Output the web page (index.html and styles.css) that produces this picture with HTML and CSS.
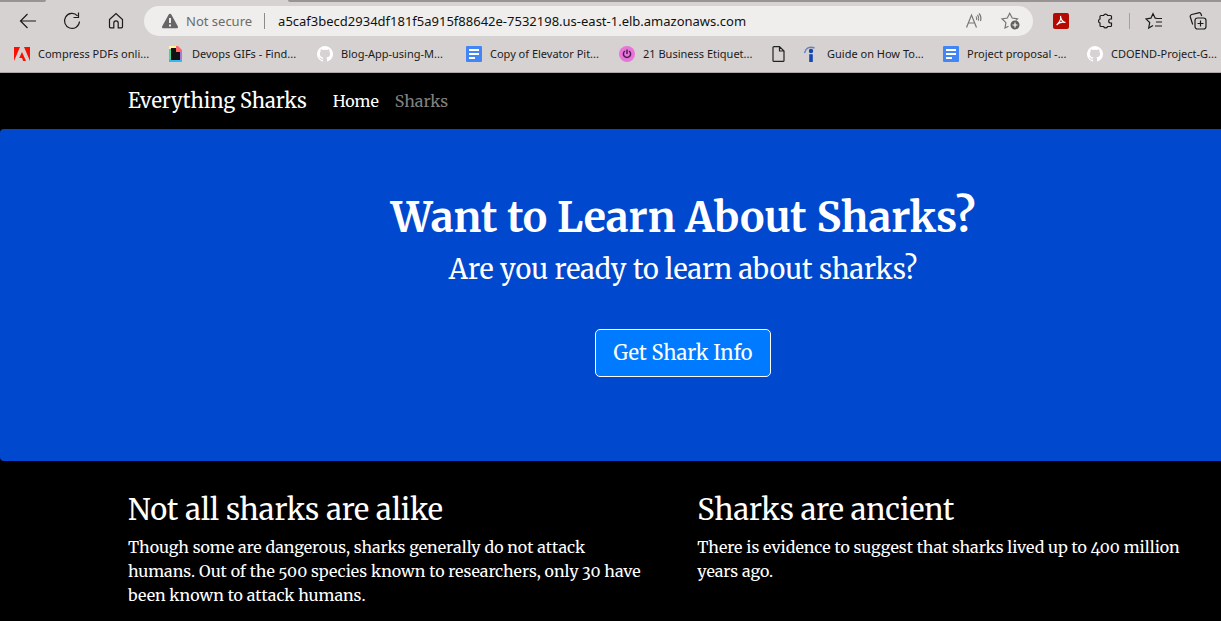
FILE: index.html
```html
<!DOCTYPE html>
<html lang="en">
<head>
<meta charset="utf-8">
<meta name="viewport" content="width=device-width, initial-scale=1">
<title>Everything Sharks</title>
<link rel="stylesheet" href="styles.css">
</head>
<body>
<header class="browser">
  <div class="tabs"><span class="tab-left"></span><span class="tab-active"></span><span class="tab-rest"></span></div>
  <div class="toolbar">
    <div class="nav-buttons">
      <button class="tool" type="button" aria-label="Back"><svg width="18" height="18" viewBox="0 0 18 18"><path d="M17 9H1.500M8.500 2 1.500 9l7 7"/></svg></button>
      <button class="tool" type="button" aria-label="Refresh"><svg width="18" height="18" viewBox="0 0 18 18"><path d="M16.500 9.500A7.500 7.500 0 1 1 14.500 3.800M15.500.5v5h-5"/></svg></button>
      <button class="tool" type="button" aria-label="Home"><svg width="18" height="18" viewBox="0 0 18 18"><path d="M2.500 7.500 9 1.500l6.500 6v7.300q0 1-1 1h-3.300V11a2.200 2.200 0 0 0-4.400 0v4.800H3.500q-1 0-1-1z"/></svg></button>
    </div>
    <div class="address">
      <svg class="warning" width="18" height="16" viewBox="0 0 18 16"><path d="M7.700 1.500a1.500 1.500 0 0 1 2.600 0l6.500 11.800a1.300 1.300 0 0 1-1.200 2H2.400a1.300 1.300 0 0 1-1.200-2z"/><path class="mark" d="M9 5v5M9 11.500v2"/></svg>
      <span class="security">Not secure</span>
      <input class="url" type="text" aria-label="Address" value="a5caf3becd2934df181f5a915f88642e-7532198.us-east-1.elb.amazonaws.com">
      <button class="tool muted" type="button" aria-label="Read aloud"><svg width="18" height="18" viewBox="0 0 18 18"><path d="M1.500 15.500 6.500 3l5 12.500M3.500 11h6M11 4.500q1.200 1.500.6 3.500M12.500 2.800q2 2.500 1 5.800M14 1.500q2.800 3.300 1.500 7.500"/></svg></button>
      <button class="tool muted" type="button" aria-label="Add to favorites"><svg width="20" height="20" viewBox="0 0 20 20"><path d="M8.500 15.200 5 17l.9-5.400L2 7.800l5.300-.8L9.700 2.200 12.200 7l5.300.8-1.500 1.500"/><circle class="solid" cx="15" cy="14" r="4.500"/><path class="mark" d="M15 11.500v5M12.500 14h5"/></svg></button>
    </div>
    <div class="extensions">
      <button class="tool" type="button" aria-label="Adobe Acrobat"><svg width="16" height="16" viewBox="0 0 16 16"><rect class="red" width="16" height="16" rx="2"/><path class="white-line" d="M7.500 3c.8 2.500-.7 6-3.800 9C5.500 9.700 9 8.600 12.500 9.500 9.700 9 7.800 6.500 7.500 3z"/></svg></button>
      <button class="tool" type="button" aria-label="Extensions"><svg width="18" height="18" viewBox="0 0 18 18"><path d="M5 3.500h2.600a2.100 2.100 0 0 1 4 0H14.500q1 0 1 1V7h-.8a2 2 0 0 0 0 4h.8v2.500q0 1-1 1h-2.900a2.100 2.100 0 0 1-4 0H5q-1 0-1-1V11a2.100 2.100 0 0 1 0-4V4.500q0-1 1-1z"/></svg></button>
      <span class="separator"></span>
      <button class="tool" type="button" aria-label="Favorites"><svg width="18" height="18" viewBox="0 0 18 18"><path d="M8 13.500 3.700 16l1-5.500L.9 6.900l5-.7L8 1.700l2.200 4.500 2 .3H17M11 10h6M10 14h7"/></svg></button>
      <button class="tool" type="button" aria-label="Collections"><svg width="18" height="18" viewBox="0 0 18 18"><rect x="6" y="6" width="11" height="11" rx="2.500"/><path d="M11.500 8.500v6M8.500 11.500h6M3.700 12.500 1.300 5A2 2 0 0 1 2.700 2.500l7-1.700A2 2 0 0 1 12 2l.7 2"/></svg></button>
    </div>
  </div>
  <nav class="bookmarks" aria-label="Favorites bar">
    <a href="#"><svg width="16" height="16" viewBox="0 0 16 16"><path fill="#fa0f00" d="M0 1h6L0 15zM10 1h6v14zM8 6l4 9H9.200L8 12H5.200z"/></svg>Compress PDFs onli...</a>
    <a href="#"><svg width="16" height="16" viewBox="0 0 16 16"><path fill="#a678d8" d="M12 5h2v9h-2z"/><path fill="#42d69b" d="M1 2h3v12H1z"/><path fill="#fff59a" d="M1 0h8v3H1z"/><path fill="#35b8f1" d="M1 13h13v3H1z"/><path fill="#121212" d="M3 2h6v4h3v8H3z"/><path fill="#ff6666" d="M8 0h2l4 4v2H8z"/></svg>Devops GIFs - Find...</a>
    <a href="#"><svg width="16" height="16" viewBox="0 0 16 16"><path fill="#fff" d="M8 0a8 8 0 0 0-2.500 15.600c.4.100.5-.2.500-.4v-1.500c-2.200.5-2.700-1-2.700-1-.4-.9-.9-1.200-.9-1.200-.7-.5.100-.5.100-.5.800.1 1.200.9 1.200.9.700 1.200 1.900.9 2.300.7.100-.5.300-.9.500-1.100-1.800-.2-3.600-.9-3.600-4 0-.9.300-1.600.8-2.100-.1-.2-.4-1 .1-2.100 0 0 .7-.2 2.200.8a7.700 7.700 0 0 1 4 0c1.500-1 2.200-.8 2.200-.8.400 1.100.2 1.900.1 2.100.5.600.8 1.300.8 2.100 0 3.100-1.900 3.700-3.600 4 .3.200.5.700.5 1.400v2.300c0 .2.100.5.500.4A8 8 0 0 0 8 0z"/></svg>Blog-App-using-M...</a>
    <a href="#"><svg width="16" height="16" viewBox="0 0 16 16"><rect width="16" height="16" rx="1" fill="#4285f4"/><path stroke="#fff" stroke-width="2" d="M3 4h10M3 8h10M3 12h6"/></svg>Copy of Elevator Pit...</a>
    <a href="#"><svg width="16" height="16" viewBox="0 0 16 16"><circle cx="8" cy="8" r="8" fill="#e874d8"/><path fill="none" stroke="#4a1f52" stroke-width="1.500" d="M6 5a3.600 3.600 0 1 0 4 0M8 3.500V8"/></svg>21 Business Etiquet...</a>
    <a href="#" aria-label="Untitled page"><svg width="16" height="16" viewBox="0 0 16 16"><path fill="none" stroke="#222" stroke-width="1.200" d="M4 .6h5.500l4.500 4.400v9.400q0 1-1 1H4q-1 0-1-1V1.600q0-1 1-1zM9.500.6V5H14"/></svg></a>
    <a href="#"><svg width="16" height="16" viewBox="0 0 16 16"><path fill="none" stroke="#5d82c4" stroke-width="1.500" d="M1.500 7C2.500 2 6.500 .2 11.500 2"/><circle cx="8" cy="5" r="2.200" fill="#1547b0"/><path fill="#1547b0" d="M6.200 8.200h3.600V16H6.200z"/></svg>Guide on How To...</a>
    <a href="#"><svg width="16" height="16" viewBox="0 0 16 16"><rect width="16" height="16" rx="1" fill="#4285f4"/><path stroke="#fff" stroke-width="2" d="M3 4h10M3 8h10M3 12h6"/></svg>Project proposal -...</a>
    <a href="#"><svg width="16" height="16" viewBox="0 0 16 16"><path fill="#fff" d="M8 0a8 8 0 0 0-2.500 15.600c.4.100.5-.2.500-.4v-1.500c-2.200.5-2.700-1-2.700-1-.4-.9-.9-1.200-.9-1.200-.7-.5.100-.5.100-.5.800.1 1.200.9 1.200.9.700 1.200 1.900.9 2.300.7.100-.5.300-.9.500-1.100-1.800-.2-3.600-.9-3.600-4 0-.9.300-1.600.8-2.100-.1-.2-.4-1 .1-2.100 0 0 .7-.2 2.200.8a7.700 7.700 0 0 1 4 0c1.500-1 2.200-.8 2.200-.8.400 1.100.2 1.900.1 2.100.5.600.8 1.300.8 2.100 0 3.100-1.900 3.700-3.600 4 .3.200.5.700.5 1.400v2.300c0 .2.100.5.500.4A8 8 0 0 0 8 0z"/></svg>CDOEND-Project-G...</a>
  </nav>
</header>
<nav class="navbar">
  <a class="brand" href="#">Everything Sharks</a>
  <a class="nav-link active" href="#">Home</a>
  <a class="nav-link" href="#">Sharks</a>
</nav>
<main>
  <section class="hero">
    <h1>Want to Learn About Sharks?</h1>
    <p>Are you ready to learn about sharks?</p>
    <a class="button" href="#">Get Shark Info</a>
  </section>
  <section class="facts">
    <article>
      <h3>Not all sharks are alike</h3>
      <p>Though some are dangerous, sharks generally do not attack humans. Out of the 500 species known to researchers, only 30 have been known to attack humans.</p>
    </article>
    <article>
      <h3>Sharks are ancient</h3>
      <p>There is evidence to suggest that sharks lived up to 400 million years ago.</p>
    </article>
  </section>
</main>
</body>
</html>
```

FILE: styles.css
```css
* { box-sizing: border-box; }
body {
  margin: 0;
  overflow-x: hidden;
  background: #000;
  color: #fff;
  font: 16px/24px Merriweather, "DejaVu Serif Condensed", "DejaVu Serif", serif;
  font-variant-numeric: oldstyle-nums;
}
a { color: inherit; text-decoration: none; }

.browser {
  background: #d6d2d1;
  border-bottom: 1px solid #aaa7a6;
  color: #1b1b1b;
  font: 11px/16px "Noto Sans", "Open Sans", sans-serif;
}
.tabs { display: flex; height: 2px; }
.tab-left { width: 46px; border-radius: 0 0 2px 0; background: #989493; }
.tab-active { width: 242px; }
.tab-rest { flex: 1; border-radius: 0 0 0 2px; background: #989493; }
.toolbar { display: flex; align-items: center; height: 38px; }
.nav-buttons { display: flex; gap: 20px; padding-left: 16px; width: 144px; }
.tool {
  display: flex;
  align-items: center;
  justify-content: center;
  width: 24px;
  height: 24px;
  padding: 0;
  border: 0;
  background: none;
  flex: none;
}
.tool svg { fill: none; stroke: #1b1b1b; stroke-width: 1.2; }
.address {
  display: flex;
  align-items: center;
  flex: 1;
  height: 30px;
  padding: 0 11px 0 17px;
  border-radius: 15px;
  background: #efeeec;
}
.warning { fill: #666; }
.warning .mark { stroke: #efeeec; stroke-width: 2; }
.security {
  margin-left: 7px;
  padding-right: 12px;
  border-right: 1px solid #8a8a8a;
  color: #6b6b6b;
  font-size: 13px;
}
.url {
  flex: 1;
  min-width: 0;
  padding: 0 0 0 13px;
  border: 0;
  background: none;
  color: #111;
  font: 13px/20px "Noto Sans", "Open Sans", sans-serif;
}
.muted svg { stroke: #767676; }
.muted + .muted { margin-left: 12px; }
.muted .solid { fill: #5f5f5f; stroke: none; }
.muted .mark { stroke: #fff; }
.extensions { display: flex; align-items: center; padding: 0 11px 0 16px; }
.extensions .tool + .tool { margin-left: 20px; }
.tool .red { fill: #b30b00; stroke: none; }
.tool .white-line { stroke: #fff; }
.separator { width: 1px; height: 16px; margin: 0 12px; background: #a3a09f; }

.bookmarks {
  display: grid;
  grid-template-columns: 154px 149px 149px 153px 151px 33px 140px 144px 1fr;
  align-items: center;
  height: 32px;
  padding: 0 0 4px 14px;
  white-space: nowrap;
}
.bookmarks a { display: flex; align-items: center; gap: 8px; min-width: 0; }
.bookmarks svg { flex: none; }

.navbar { display: flex; align-items: center; height: 56px; padding-left: 128px; }
.brand { margin-right: 18px; font-size: 20px; line-height: 30px; }
.nav-link { padding: 8px; color: #808080; }
.nav-link.active { color: #fff; }

.hero {
  display: flex;
  flex-direction: column;
  align-items: center;
  padding: 65px 0 84px 145px;
  border-radius: 4px 0 0 4px;
  background: #0048cd;
}
.hero h1 { margin: 0 0 8px; font-size: 41px; line-height: 48px; }
.hero p { margin: 0 0 40px; font-size: 27px; line-height: 39px; }
.button {
  padding: 8px 18px;
  border: 1px solid #fff;
  border-radius: 5px;
  background: #007bff;
  font-size: 20px;
  line-height: 30px;
}
.facts {
  display: grid;
  grid-template-columns: 51fr 49fr;
  column-gap: 24px;
  padding: 32px 0 0 128px;
}
.facts article { padding-right: 18px; }
.facts h3 { margin: 0 0 8px; font-size: 29px; font-weight: 400; line-height: 34px; }
.facts p { margin: 0; }
```
